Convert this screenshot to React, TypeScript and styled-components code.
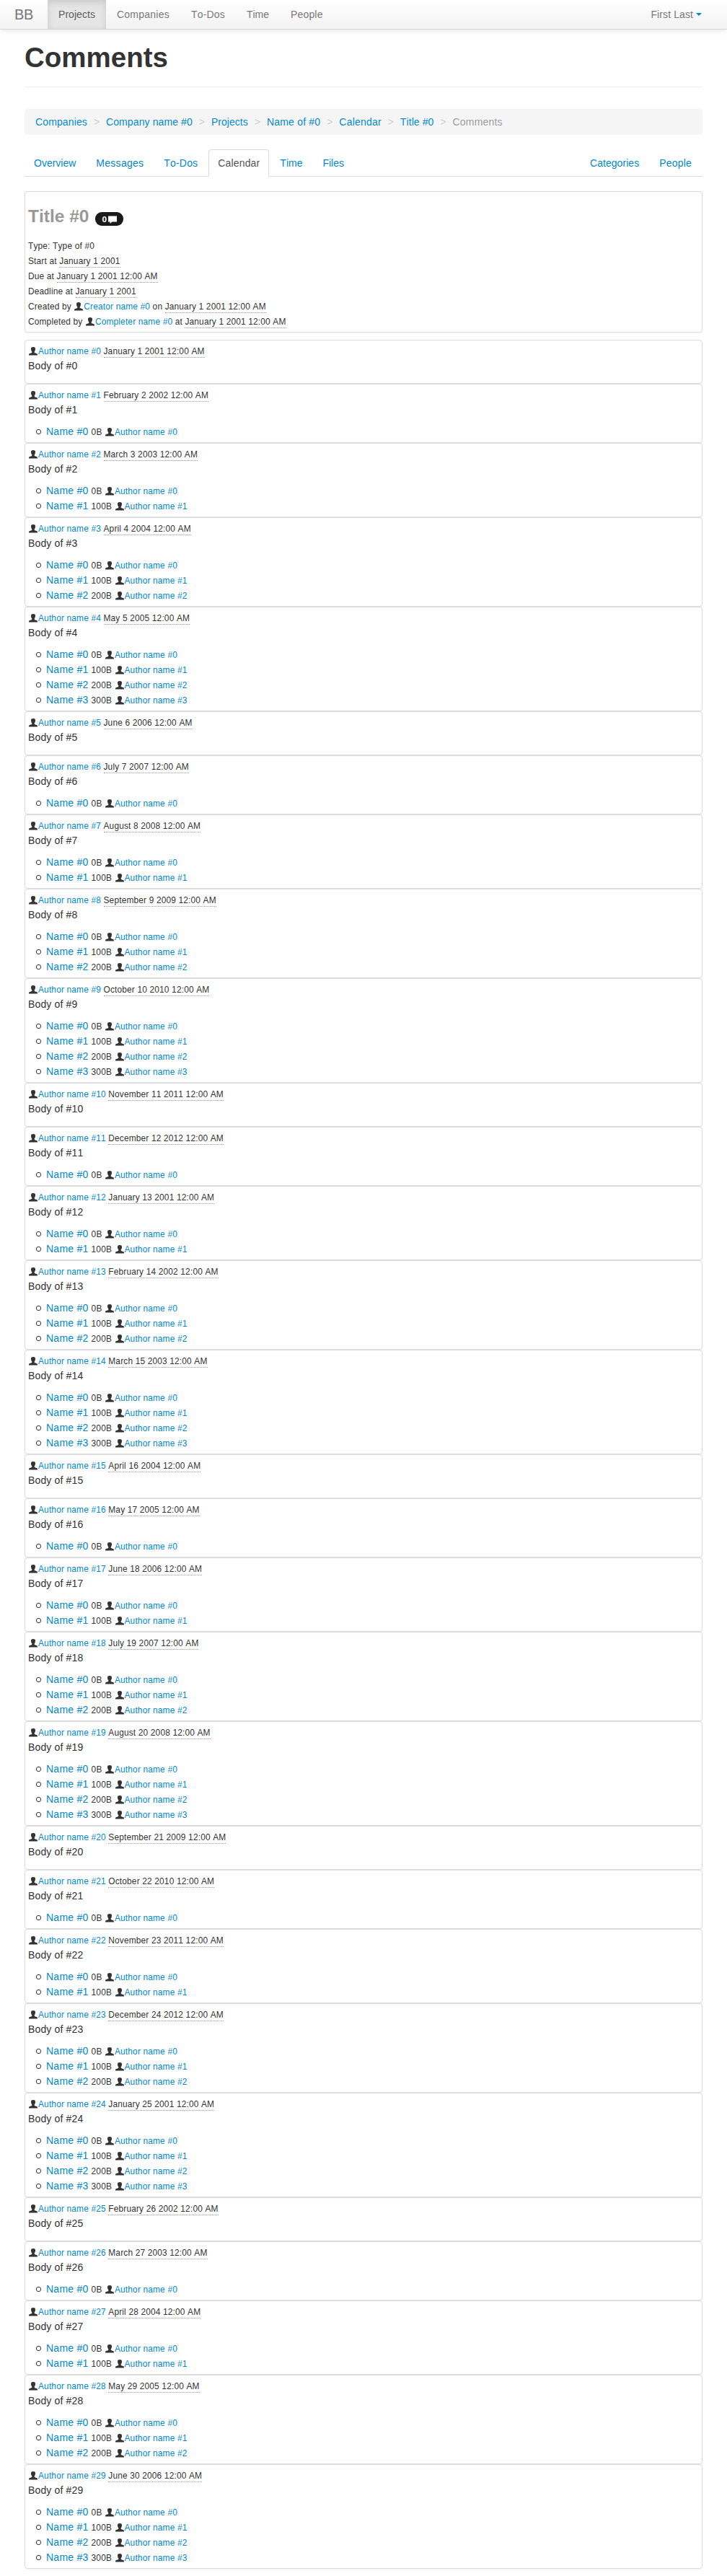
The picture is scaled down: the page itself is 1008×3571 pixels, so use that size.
import React from "react";
import styled, { createGlobalStyle } from "styled-components";

const LINK = "#0088cc";

const Global = createGlobalStyle`
  body {
    margin: 0;
    background: #fff;
    color: #333;
    font: 14px/20px "Liberation Sans", Arial, sans-serif;
    font-kerning: none;
  }
  *, *::before, *::after { box-sizing: border-box; }
`;

const Navbar = styled.nav`
  display: flex;
  height: 41px;
  padding-right: 20px;
  background: linear-gradient(#ffffff, #f2f2f2);
  border-bottom: 1px solid #d4d4d4;
  box-shadow: 0 1px 10px rgba(0, 0, 0, 0.1);
  text-shadow: 0 1px 0 #fff;
  color: #777;
`;

const Brand = styled.a`
  width: 66px;
  padding: 10px 20px;
  font-size: 20px;
  letter-spacing: -0.4px;
`;

const NavItem = styled.a<{ $active?: boolean; $track?: number }>`
  padding: 10px 15px;
  letter-spacing: ${(p) => p.$track ?? 0}px;
  ${(p) =>
    p.$active &&
    `color: #555; background: #e5e5e5; box-shadow: inset 0 3px 8px rgba(0, 0, 0, 0.125);`}
`;

const UserMenu = styled(NavItem)`
  display: flex;
  align-items: center;
  gap: 4px;
  margin-left: auto;
`;

const Caret = styled.span`
  border: 4px solid transparent;
  border-top-color: ${LINK};
  border-bottom: 0;
`;

const Page = styled.main`
  width: 940px;
  margin: 0 auto 10px 34px;
  padding-top: 19px;
`;

const PageTitle = styled.h1`
  margin: 0 0 30px;
  padding-bottom: 20px;
  border-bottom: 1px solid #eee;
  font-size: 38.5px;
  line-height: 40px;
`;

const Breadcrumb = styled.ul`
  display: flex;
  margin: 0 0 20px;
  padding: 8px 15px;
  list-style: none;
  background: #f5f5f5;
  border-radius: 4px;
  text-shadow: 0 1px 0 #fff;
`;

const Crumb = styled.li<{ $track: number; $last?: boolean }>`
  color: ${(p) => (p.$last ? "#999" : LINK)};
  letter-spacing: ${(p) => p.$track}px;
`;

const Divider = styled.li`
  width: 26px;
  color: #ccc;
  text-align: center;
`;

const Tabs = styled.div`
  display: flex;
  height: 38px;
  margin-bottom: 20px;
  border-bottom: 1px solid #ddd;
`;

const Tab = styled.a<{ $active?: boolean; $track?: number; $pushed?: boolean }>`
  height: 38px;
  margin-right: 2px;
  margin-left: ${(p) => (p.$pushed ? "auto" : 0)};
  padding: 8px 12px;
  border: 1px solid transparent;
  border-radius: 4px 4px 0 0;
  color: ${LINK};
  letter-spacing: ${(p) => p.$track ?? 0}px;
  ${(p) =>
    p.$active && `color: #555; background: #fff; border-color: #ddd; border-bottom-color: #fff;`}
`;

const Card = styled.article`
  padding: 4px;
  border: 1px solid #ddd;
  border-radius: 4px;
  box-shadow: 0 1px 3px rgba(0, 0, 0, 0.055);
`;

const EventCard = styled(Card)`
  margin-bottom: 10px;
`;

const EventTitle = styled.h3`
  display: flex;
  align-items: center;
  gap: 9px;
  margin: 10px 0;
  color: #999;
  font-size: 24.5px;
  line-height: 40px;
`;

const Badge = styled.span`
  display: flex;
  align-items: center;
  gap: 1px;
  width: 39px;
  height: 19px;
  margin-top: 7px;
  padding-left: 9px;
  border-radius: 9px;
  background: #1a1a1a;
  color: #fff;
  font-size: 11.8px;
  line-height: 14px;
`;

const Meta = styled.div`
  height: 21px;
  font-size: 11.9px;
  line-height: 22px;
  letter-spacing: 0.17px;
  white-space: pre;
`;

const Link = styled.a`
  color: ${LINK};
`;

const Stamp = styled.time`
  padding-bottom: 1px;
  border-bottom: 1px dotted #999;
`;

const Body = styled.p`
  margin: 0 0 10px;
  letter-spacing: 0.15px;
`;

const Files = styled.ul`
  margin: 0;
  padding: 0 0 0 11px;
  list-style: none;
`;

const FileRow = styled.li`
  display: flex;
  align-items: baseline;
  height: 21px;
  &::before {
    content: "";
    flex: none;
    align-self: center;
    width: 7px;
    height: 7px;
    margin-right: 7px;
    border: 1px solid #333;
    border-radius: 3px;
  }
`;

const FileName = styled(Link)`
  margin-right: 4px;
  letter-spacing: 0.25px;
`;

const PersonSvg = styled.svg`
  width: 14px;
  height: 14px;
  vertical-align: -2px;
  fill: #333;
`;

const Person = () => (
  <PersonSvg viewBox="0 0 14 14">
    <path d="M4 4.500C4 2.700 5.200 2 7 2s3 .700 3 2.500c0 1.900-.5 3-1.300 4v1.200c.7.600 2 .8 3.100 1.200.9.400 1.200 1 1.200 2.700H1c0-1.700.3-2.300 1.200-2.700 1.100-.4 2.400-.6 3.100-1.200V8.500C4.500 7.500 4 6.400 4 4.500z" />
  </PersonSvg>
);

const Bubble = () => (
  <svg width="14" height="14" viewBox="0 0 14 14" fill="#fff">
    <path d="M1 2.500h12v8H6.500L3.500 13v-2.500H1z" />
  </svg>
);

const crumbs: [string, number][] = [
  ["Companies", 0.13],
  ["Company name #0", 0.107],
  ["Projects", 0.05],
  ["Name of #0", 0.21],
  ["Calendar", 0.2],
  ["Title #0", 0.1],
];

const months = [
  "January", "February", "March", "April", "May", "June",
  "July", "August", "September", "October", "November", "December",
];

const comments = Array.from({ length: 30 }, (_, i) => ({
  id: i,
  date: `${months[i % 12]} ${i + 1} ${2001 + (i % 12)} 12:00 AM`,
  files: Array.from({ length: i % 5 }, (_, n) => n),
}));

export default function App() {
  return (
    <>
      <Global />
      <Navbar>
        <Brand>BB</Brand>
        <NavItem $active $track={0.05}>Projects</NavItem>
        <NavItem $track={0.24}>Companies</NavItem>
        <NavItem $track={0.18}>To-Dos</NavItem>
        <NavItem>Time</NavItem>
        <NavItem $track={0.15}>People</NavItem>
        <UserMenu $track={0.1}>
          First Last
          <Caret />
        </UserMenu>
      </Navbar>
      <Page>
        <PageTitle>Comments</PageTitle>
        <Breadcrumb>
          {crumbs.map(([label, track]) => (
            <React.Fragment key={label}>
              <Crumb $track={track}>{label}</Crumb>
              <Divider>&gt;</Divider>
            </React.Fragment>
          ))}
          <Crumb $last $track={0.2}>Comments</Crumb>
        </Breadcrumb>
        <Tabs>
          <Tab>Overview</Tab>
          <Tab $track={0.27}>Messages</Tab>
          <Tab $track={0.18}>To-Dos</Tab>
          <Tab $active $track={0.15}>Calendar</Tab>
          <Tab>Time</Tab>
          <Tab>Files</Tab>
          <Tab $pushed $track={0.05}>Categories</Tab>
          <Tab $track={0.2}>People</Tab>
        </Tabs>
        <EventCard>
          <EventTitle>
            Title #0
            <Badge>0<Bubble /></Badge>
          </EventTitle>
          <Meta>Type: Type of #0</Meta>
          <Meta>Start at <Stamp>January 1 2001</Stamp></Meta>
          <Meta>Due at <Stamp>January 1 2001 12:00 AM</Stamp></Meta>
          <Meta>Deadline at <Stamp>January 1 2001</Stamp></Meta>
          <Meta>
            Created by <Person /><Link>Creator name #0</Link> on <Stamp>January 1 2001 12:00 AM</Stamp>
          </Meta>
          <Meta>
            Completed by <Person /><Link>Completer name #0</Link> at <Stamp>January 1 2001 12:00 AM</Stamp>
          </Meta>
        </EventCard>
        {comments.map((c) => (
          <Card key={c.id}>
            <Meta>
              <Person /><Link>Author name #{c.id}</Link> <Stamp>{c.date}</Stamp>
            </Meta>
            <Body>Body of #{c.id}</Body>
            {c.files.length > 0 && (
              <Files>
                {c.files.map((n) => (
                  <FileRow key={n}>
                    <FileName>Name #{n}</FileName>
                    <Meta>
                      {n * 100}B <Person /><Link>Author name #{n}</Link>
                    </Meta>
                  </FileRow>
                ))}
              </Files>
            )}
          </Card>
        ))}
      </Page>
    </>
  );
}
